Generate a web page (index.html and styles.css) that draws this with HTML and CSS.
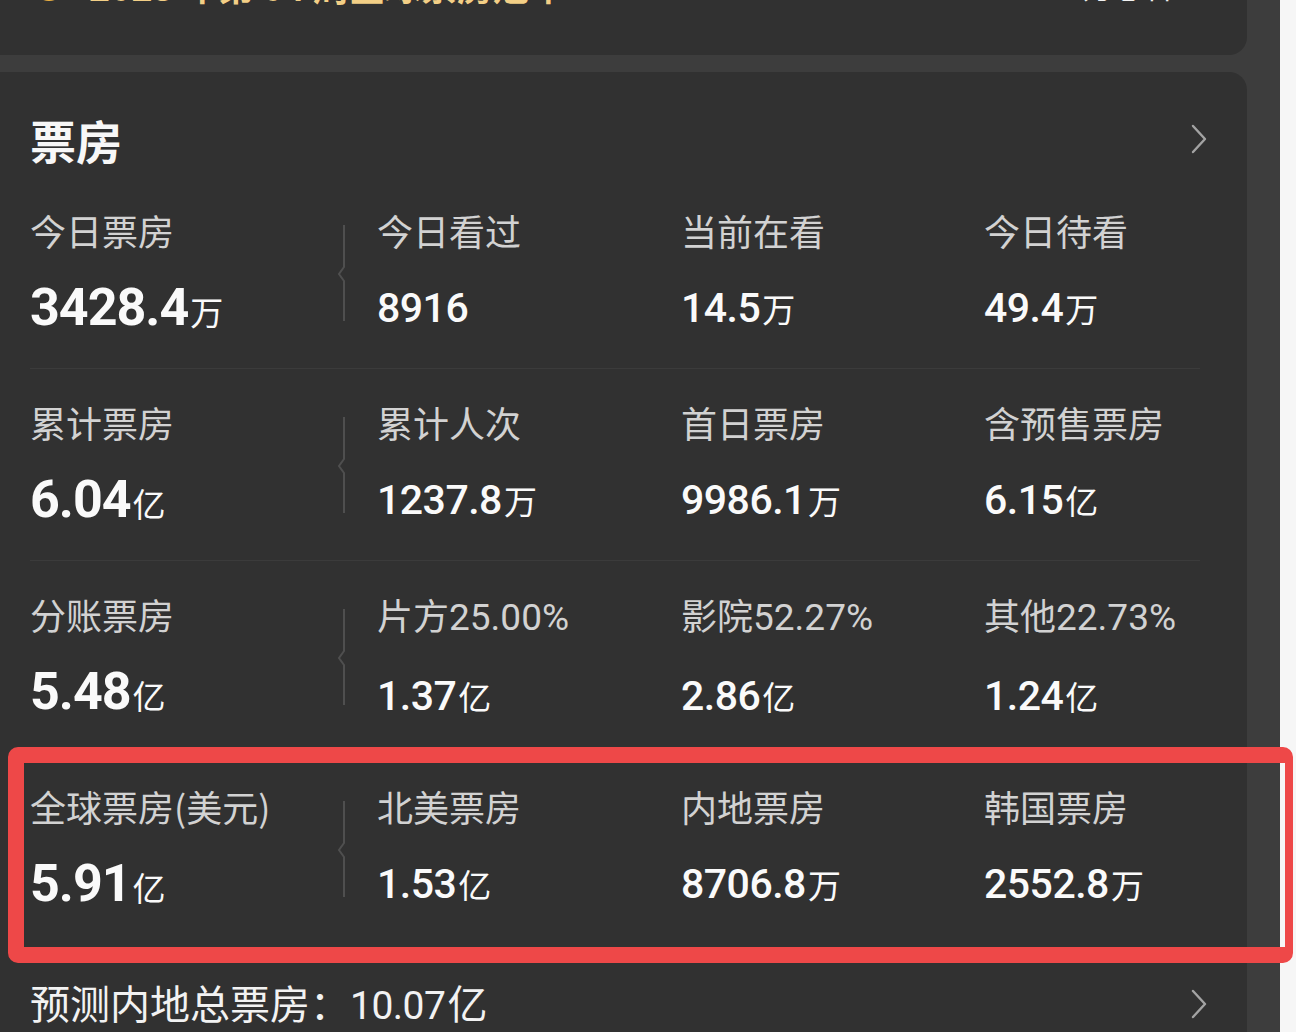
FILE: index.html
```html
<!DOCTYPE html>
<html lang="zh-CN">
<head>
    <meta charset="UTF-8">
    <meta name="viewport" content="width=device-width, initial-scale=1.0">
    <title>票房</title>
    <link rel="stylesheet" href="styles.css">
</head>
<body>
    <div class="screen">
        <div class="app">
            <!-- Rank card (scrolled mostly out of view) -->
            <section class="card card-top">
                <div class="rank-line">
                    <span class="rank-icon"></span>
                    <span class="rank-text">2023 年第 04 周全球票房冠军</span>
                    <span class="rank-side">51.4万想看</span>
                </div>
            </section>

            <!-- Box office card -->
            <section class="card card-box">
                <div class="card-head">
                    <h2 class="card-title">票房</h2>
                    <svg class="chevron" viewBox="0 0 16 30" width="16" height="30"><polyline points="2,2 14,15 2,28" /></svg>
                </div>

                <div class="stat-row">
                    <div class="stat stat-main">
                        <div class="stat-body">
                            <div class="stat-label">今日票房</div>
                            <div class="stat-value"><span class="num">3428.4</span><span class="unit">万</span></div>
                        </div>
                        <svg class="split" viewBox="0 0 12 96" width="12" height="96"><path d="M7 0 V42 L2 49 L7 56 V96" /></svg>
                    </div>
                    <div class="stat">
                        <div class="stat-label">今日看过</div>
                        <div class="stat-value"><span class="num">8916</span></div>
                    </div>
                    <div class="stat">
                        <div class="stat-label">当前在看</div>
                        <div class="stat-value"><span class="num">14.5</span><span class="unit">万</span></div>
                    </div>
                    <div class="stat">
                        <div class="stat-label">今日待看</div>
                        <div class="stat-value"><span class="num">49.4</span><span class="unit">万</span></div>
                    </div>
                </div>

                <div class="stat-row">
                    <div class="stat stat-main">
                        <div class="stat-body">
                            <div class="stat-label">累计票房</div>
                            <div class="stat-value"><span class="num">6.04</span><span class="unit">亿</span></div>
                        </div>
                        <svg class="split" viewBox="0 0 12 96" width="12" height="96"><path d="M7 0 V42 L2 49 L7 56 V96" /></svg>
                    </div>
                    <div class="stat">
                        <div class="stat-label">累计人次</div>
                        <div class="stat-value"><span class="num">1237.8</span><span class="unit">万</span></div>
                    </div>
                    <div class="stat">
                        <div class="stat-label">首日票房</div>
                        <div class="stat-value"><span class="num">9986.1</span><span class="unit">万</span></div>
                    </div>
                    <div class="stat">
                        <div class="stat-label">含预售票房</div>
                        <div class="stat-value"><span class="num">6.15</span><span class="unit">亿</span></div>
                    </div>
                </div>

                <div class="stat-row">
                    <div class="stat stat-main">
                        <div class="stat-body">
                            <div class="stat-label">分账票房</div>
                            <div class="stat-value"><span class="num">5.48</span><span class="unit">亿</span></div>
                        </div>
                        <svg class="split" viewBox="0 0 12 96" width="12" height="96"><path d="M7 0 V42 L2 49 L7 56 V96" /></svg>
                    </div>
                    <div class="stat">
                        <div class="stat-label">片方<span class="num">25.00%</span></div>
                        <div class="stat-value"><span class="num">1.37</span><span class="unit">亿</span></div>
                    </div>
                    <div class="stat">
                        <div class="stat-label">影院<span class="num">52.27%</span></div>
                        <div class="stat-value"><span class="num">2.86</span><span class="unit">亿</span></div>
                    </div>
                    <div class="stat">
                        <div class="stat-label">其他<span class="num">22.73%</span></div>
                        <div class="stat-value"><span class="num">1.24</span><span class="unit">亿</span></div>
                    </div>
                </div>

                <div class="stat-row last">
                    <div class="stat stat-main">
                        <div class="stat-body">
                            <div class="stat-label">全球票房(美元)</div>
                            <div class="stat-value"><span class="num">5.91</span><span class="unit">亿</span></div>
                        </div>
                        <svg class="split" viewBox="0 0 12 96" width="12" height="96"><path d="M7 0 V42 L2 49 L7 56 V96" /></svg>
                    </div>
                    <div class="stat">
                        <div class="stat-label">北美票房</div>
                        <div class="stat-value"><span class="num">1.53</span><span class="unit">亿</span></div>
                    </div>
                    <div class="stat">
                        <div class="stat-label">内地票房</div>
                        <div class="stat-value"><span class="num">8706.8</span><span class="unit">万</span></div>
                    </div>
                    <div class="stat">
                        <div class="stat-label">韩国票房</div>
                        <div class="stat-value"><span class="num">2552.8</span><span class="unit">万</span></div>
                    </div>
                </div>

                <div class="card-foot">
                    <div class="forecast">预测内地总票房：<span class="num">10.07</span><span class="unit">亿</span></div>
                    <svg class="chevron" viewBox="0 0 16 30" width="16" height="30"><polyline points="2,2 14,15 2,28" /></svg>
                </div>
            </section>
        </div>
        <div class="edge"></div>
    </div>

    <!-- Red annotation box -->
    <div class="highlight"></div>
</body>
</html>
```

FILE: styles.css
```css
/* Basic Styling */
body {
    margin: 0;
    height: 100vh;
    overflow: hidden;
    background-color: #f6f6f6;
    font-family: "Noto Sans CJK SC", "Noto Sans", sans-serif;
    color: #f5f5f5;
}

.screen {
    display: flex;
    height: 100%;
}

.app {
    width: 1280px;
    padding-right: 33px;
    box-sizing: border-box;
    background-color: #3d3d3d;
    overflow: hidden;
}

.edge {
    flex: 1;
    background-color: #f6f6f6;
}

/* Cards */
.card {
    margin-left: -20px;
    background-color: #313131;
    border-radius: 18px;
}

.card-top {
    margin-top: -45px;
    margin-bottom: 17px;
    height: 100px;
    padding: 12px 0 0 53px;
    box-sizing: border-box;
}

.rank-line {
    display: flex;
    align-items: center;
    height: 36px;
}

.rank-icon {
    width: 32px;
    height: 32px;
    border-radius: 50%;
    background-color: #f0b443;
}

.rank-text {
    margin-left: 24px;
    font-size: 36px;
    font-weight: 700;
    color: #f3cf86;
}

.rank-side {
    margin-left: auto;
    margin-right: 74px;
    font-size: 30px;
    color: #f2f2f2;
}

.card-box {
    padding: 0 39px 0 50px;
    min-height: 1000px;
}

/* Header */
.card-head {
    display: flex;
    align-items: center;
    justify-content: space-between;
    padding: 44px 0 15px;
}

.card-title {
    margin: 0;
    font-size: 46px;
    line-height: 46px;
    font-weight: 700;
    color: #f7f7f7;
}

.chevron {
    margin-right: 1px;
}

.chevron polyline {
    fill: none;
    stroke: #a3a3a3;
    stroke-width: 2.4;
    stroke-linecap: round;
    stroke-linejoin: round;
}

/* Stat rows */
.stat-row {
    display: grid;
    grid-template-columns: 347px 304px 303px 1fr;
    height: 192px;
    box-sizing: border-box;
    padding-top: 33px;
    margin-right: 8px;
    border-bottom: 1px solid #3b3b3b;
}

.stat-row.last {
    border-bottom: none;
}

.stat-main {
    display: flex;
    align-items: flex-start;
    justify-content: space-between;
    padding-right: 28px;
}

.split {
    margin-top: 15px;
}

.split path {
    fill: none;
    stroke: #4f4f4f;
    stroke-width: 2;
}

.stat-label {
    font-size: 36px;
    line-height: 40px;
    color: #d2d2d2;
    white-space: nowrap;
}

.stat-label .num {
    font-size: 37px;
}

.stat-value {
    margin-top: 28px;
    height: 60px;
    line-height: 60px;
    color: #fafafa;
    white-space: nowrap;
}

.num {
    font-family: Roboto, "Liberation Sans", sans-serif;
}

.stat-value .num {
    font-size: 41px;
    font-weight: 500;
    letter-spacing: -0.5px;
}

.stat-main .stat-value .num {
    font-size: 52px;
    font-weight: 700;
    letter-spacing: -1px;
}

.unit {
    font-size: 33px;
    margin-left: 2px;
}

/* Footer */
.card-foot {
    display: flex;
    align-items: center;
    justify-content: space-between;
    padding-top: 35px;
}

.forecast {
    font-size: 40px;
    line-height: 44px;
    color: #f2f2f2;
}

.forecast .num {
    font-size: 39px;
    letter-spacing: -0.5px;
}

.forecast .unit {
    font-size: 40px;
}

/* Annotation */
.highlight {
    position: absolute;
    left: 8px;
    top: 747px;
    width: 1285px;
    height: 216px;
    box-sizing: border-box;
    border: 16px solid #ee4848;
    border-right-width: 8px;
    border-radius: 10px;
}
```
